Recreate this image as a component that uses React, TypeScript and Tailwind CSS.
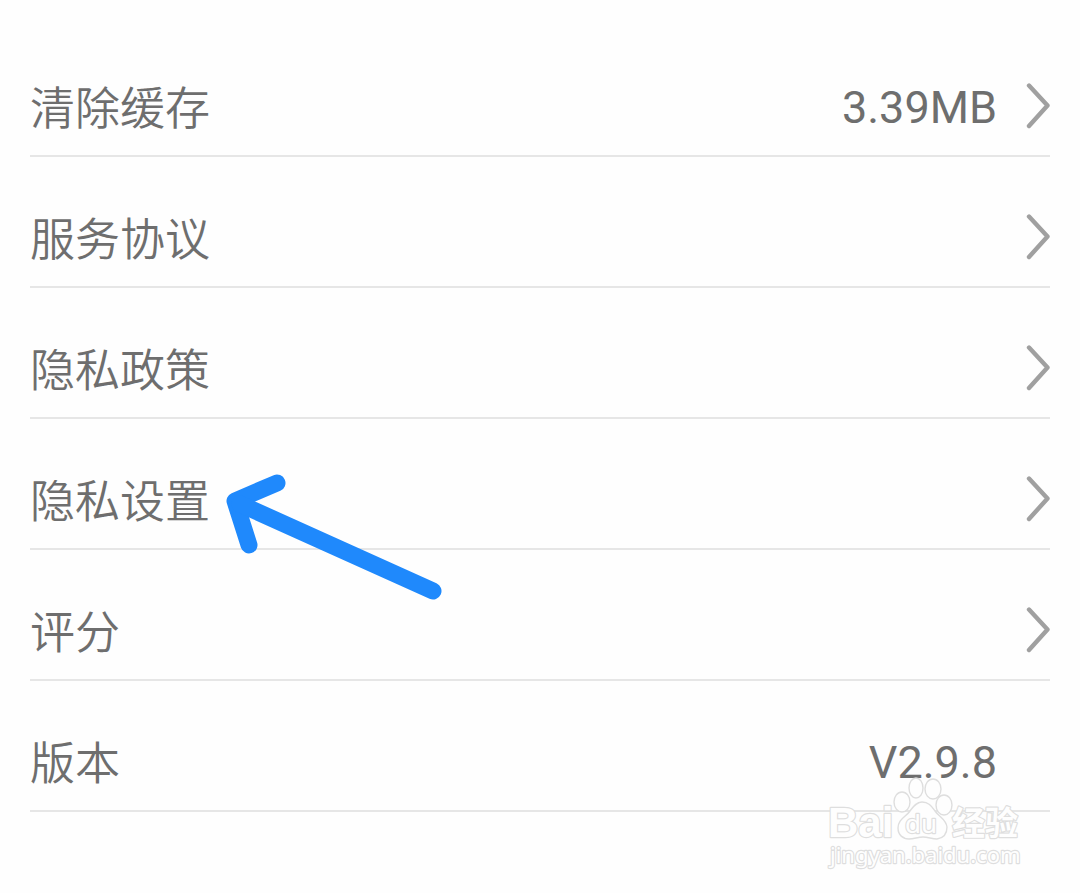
import clsx from "clsx";

interface Setting {
  id: string;
  label: string;
  value?: string;
  link: boolean;
}

const SETTINGS: Setting[] = [
  { id: "cache", label: "清除缓存", value: "3.39MB", link: true },
  { id: "terms", label: "服务协议", link: true },
  { id: "policy", label: "隐私政策", link: true },
  { id: "privacy", label: "隐私设置", link: true },
  { id: "rate", label: "评分", link: true },
  { id: "version", label: "版本", value: "V2.9.8", link: false },
];

const ROW = "flex w-full items-center pt-[52px] pb-[21px] text-left text-[45px] leading-[48px]";

function Chevron() {
  return (
    <svg className="ml-[29px] h-[46px] w-6 shrink-0" viewBox="0 0 24 46" fill="none" aria-hidden="true">
      <path d="M3 2.5 L21.5 22.5 L3 43" stroke="#a0a0a0" strokeWidth="4.4" strokeLinecap="round" strokeLinejoin="round" />
    </svg>
  );
}

function PointerArrow() {
  return (
    <svg
      className="pointer-events-none absolute top-[51px] left-[190px] z-10 h-[134px] w-[225px]"
      viewBox="0 0 225 134"
      fill="none"
      aria-hidden="true"
    >
      <g stroke="#1f89fc" strokeWidth="17" strokeLinecap="round" strokeLinejoin="round">
        <path d="M57 13 L15 31 L29 75" />
        <path d="M20 34 L213 121" />
      </g>
    </svg>
  );
}

function Watermark() {
  return (
    <svg
      className="pointer-events-none absolute top-[95px] right-6 h-[100px] w-[200px]"
      viewBox="0 0 200 100"
      fill="#fefefe"
      stroke="#dedede"
      strokeWidth="1.4"
      strokeLinejoin="round"
      aria-hidden="true"
    >
      <ellipse cx="76" cy="26" rx="8" ry="10" />
      <ellipse cx="90" cy="12" rx="7" ry="10" />
      <ellipse cx="107" cy="13" rx="8" ry="10" />
      <ellipse cx="118" cy="29" rx="8" ry="10" />
      <path d="M96 26 C90 26 87 31 84 35 C80 41 72 43 72 52 C72 59 77 63 83 63 C88 63 92 61 97 61 C102 61 106 63 111 63 C118 62 121 58 121 51 C120 43 113 41 109 35 C106 31 103 26 96 26 Z" />
      <g strokeWidth="2.4" style={{ paintOrder: "stroke" }}>
        <text x="2" y="61" fontSize="42" className="font-['Liberation_Sans',sans-serif] font-bold">Bai</text>
        <text x="79" y="57" fontSize="26" className="font-['Noto_Sans',sans-serif]">du</text>
        <text x="126" y="59" fontSize="33" className="font-['Noto_Sans_CJK_SC',sans-serif] font-bold">经验</text>
        <text x="4" y="87" fontSize="22" className="font-['Noto_Sans',sans-serif]">jingyan.baidu.com</text>
      </g>
    </svg>
  );
}

function SettingRow({ item }: { item: Setting }) {
  const content = (
    <>
      <span className="flex-1 pt-2 font-[350]">{item.label}</span>
      {item.value && <span className={clsx("pt-1", !item.link && "mr-[53px]")}>{item.value}</span>}
      {item.link && <Chevron />}
    </>
  );

  return (
    <li className="relative border-b-2 border-[#e6e6e6]">
      {item.link ? (
        <button type="button" className={ROW}>{content}</button>
      ) : (
        <div className={ROW}>{content}</div>
      )}
      {item.id === "privacy" && <PointerArrow />}
      {item.id === "version" && <Watermark />}
    </li>
  );
}

export default function App() {
  return (
    <main className="min-h-screen bg-[#fefefe] px-[30px] pt-[26px] font-['Roboto','Noto_Sans_CJK_SC',sans-serif] text-[#6e6e6e]">
      <ul>
        {SETTINGS.map((item) => (
          <SettingRow key={item.id} item={item} />
        ))}
      </ul>
    </main>
  );
}
